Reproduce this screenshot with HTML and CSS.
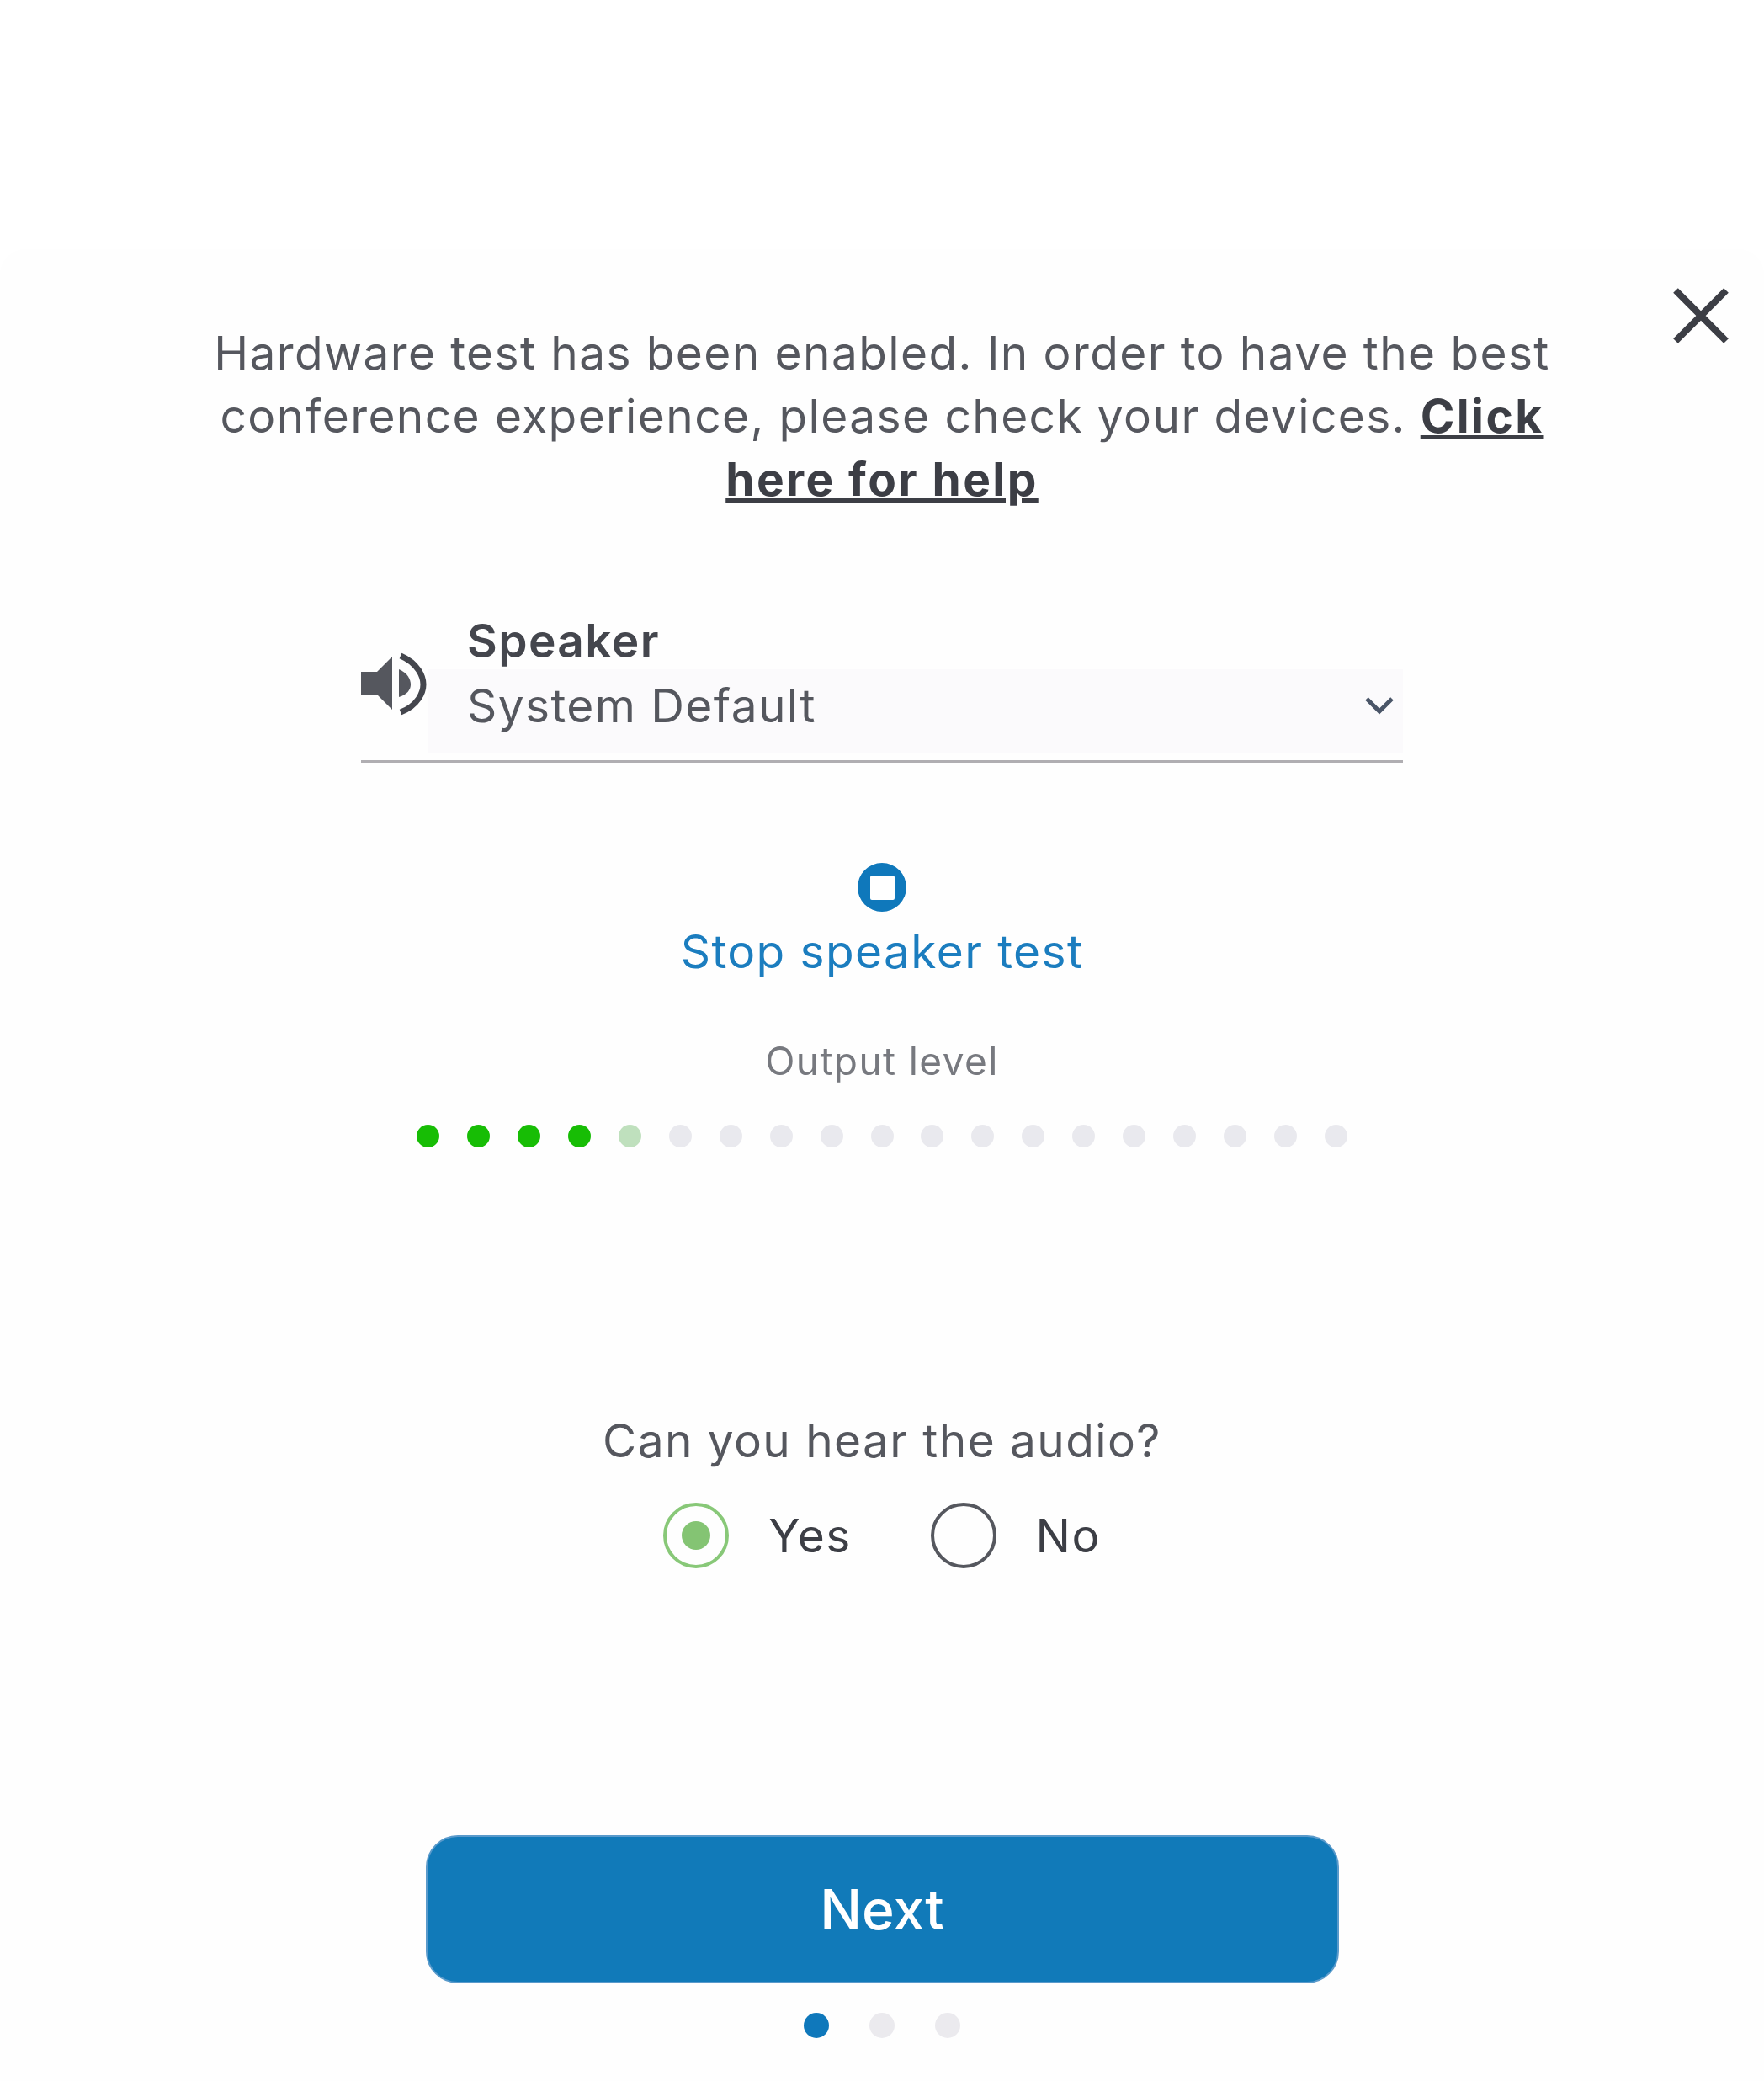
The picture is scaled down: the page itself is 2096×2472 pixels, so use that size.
FILE: index.html
```html
<!DOCTYPE html>
<html lang="en">
  <head>
    <meta charset="UTF-8" />
    <title>Hardware test</title>
    <link rel="stylesheet" href="styles.css">
  </head>
  <body>
    <main class="card">
      <button class="close" type="button" aria-label="Close">
        <svg viewBox="0 0 66 66" width="66" height="66">
          <path d="M3 3 L63 63 M63 3 L3 63" fill="none" stroke="#3c3e45" stroke-width="8" />
        </svg>
      </button>

      <p class="intro">
        Hardware test has been enabled. In order to have the best<br>
        conference experience, please check your devices. <a href="#">Click<br>here for help</a>
      </p>

      <div class="field">
        <svg class="field-icon" viewBox="0 0 80 80" width="80" height="80">
          <path d="M0 26 H19 L37 8 V71 L19 53 H0 Z" fill="#55575e" />
          <path d="M45 23 C55 27 59 35 59 41 C59 47 55 53 45 56 Z" fill="#55575e" />
          <path d="M47 7 C68 16 74 32 74 41 C74 50 68 66 47 74" fill="none" stroke="#44464d" stroke-width="7" />
        </svg>
        <div class="field-body">
          <label class="field-label">Speaker</label>
          <div class="select">
            <span>System Default</span>
            <svg viewBox="0 0 36 24" width="36" height="24">
              <path d="M3 4 L18 19 L33 4" fill="none" stroke="#4a5568" stroke-width="5" />
            </svg>
          </div>
        </div>
      </div>

      <div class="stop-icon"><span></span></div>
      <a class="stop-link" href="#">Stop speaker test</a>

      <div class="level-label">Output level</div>
      <div class="level">
        <span class="on"></span><span class="on"></span><span class="on"></span><span class="on"></span>
        <span class="half"></span>
        <span></span><span></span><span></span><span></span><span></span><span></span><span></span>
        <span></span><span></span><span></span><span></span><span></span><span></span><span></span>
      </div>

      <div class="question">Can you hear the audio?</div>
      <div class="answers">
        <div class="answer">
          <span class="radio checked"></span>
          <span>Yes</span>
        </div>
        <div class="answer">
          <span class="radio"></span>
          <span>No</span>
        </div>
      </div>

      <button class="next" type="button">Next</button>

      <div class="steps">
        <span class="current"></span><span></span><span></span>
      </div>
    </main>
  </body>
</html>
```

FILE: styles.css
```css
body {
  margin: 0;
  background: #ffffff;
  font-family: Inter, "Liberation Sans", sans-serif;
  color: #55575e;
}

/* the capture is a soft upscale, so everything is slightly out of focus */
.card {
  position: relative;
  margin-top: 296px;
  padding: 86px 0 51px;
  background: #fefefe;
  border-radius: 30px 30px 0 0;
  display: flex;
  flex-direction: column;
  align-items: center;
  filter: blur(0.7px);
}

.close {
  position: absolute;
  top: 46px;
  left: 1988px;
  padding: 0;
  border: none;
  background: none;
  line-height: 0;
}

.intro {
  margin: 0;
  font-size: 55px;
  line-height: 75px;
  letter-spacing: 1.4px;
  text-align: center;
  white-space: nowrap;
}

.intro a {
  color: #3c3e45;
  font-weight: 700;
  letter-spacing: 2.4px;
}

.field {
  display: flex;
  align-items: flex-start;
  width: 1238px;
  margin-top: 120px;
  border-bottom: 3px solid #b0aeb2;
  padding-bottom: 8px;
}

.field-icon {
  flex: none;
  margin-top: 45px;
}

.field-body {
  flex: 1;
}

.field-label {
  display: block;
  height: 68px;
  padding-left: 46px;
  font-size: 55px;
  line-height: 68px;
  font-weight: 600;
  letter-spacing: 1.4px;
  color: #44464d;
}

.select {
  display: flex;
  align-items: center;
  justify-content: space-between;
  height: 100px;
  padding: 0 10px 14px 46px;
  box-sizing: border-box;
  background: #fbfafc;
  font-size: 55px;
  letter-spacing: 1.4px;
}

.stop-icon {
  display: flex;
  align-items: center;
  justify-content: center;
  width: 58px;
  height: 58px;
  margin-top: 119px;
  border-radius: 50%;
  background: #0f78bb;
}

.stop-icon span {
  width: 29px;
  height: 29px;
  border-radius: 2px;
  background: #ffffff;
}

.stop-link {
  margin-top: 17px;
  font-size: 55px;
  line-height: 60px;
  letter-spacing: 1.4px;
  color: #1b7dbf;
  text-decoration: none;
}

.level-label {
  margin-top: 75px;
  font-size: 46px;
  line-height: 50px;
  letter-spacing: 1.4px;
  color: #77797f;
}

.level {
  display: flex;
  gap: 32.9px;
  margin-top: 51px;
}

.level span {
  width: 27px;
  height: 27px;
  border-radius: 50%;
  background: #e9e9ee;
}

.level .on {
  background: #17bd05;
}

.level .half {
  background: #bfe0bd;
}

.question {
  margin-top: 313px;
  font-size: 55px;
  line-height: 70px;
  letter-spacing: 1.4px;
}

.answers {
  display: flex;
  gap: 94px;
  margin-top: 39px;
}

.answer {
  display: flex;
  align-items: center;
  gap: 47px;
  font-size: 55px;
  letter-spacing: 1.4px;
  color: #3c3e45;
}

.radio {
  display: flex;
  align-items: center;
  justify-content: center;
  width: 78px;
  height: 78px;
  box-sizing: border-box;
  border: 4px solid #55575e;
  border-radius: 50%;
}

.radio.checked {
  border-color: #88c878;
}

.radio.checked::after {
  content: "";
  width: 34px;
  height: 34px;
  border-radius: 50%;
  background: #84c473;
}

.next {
  width: 1085px;
  height: 176px;
  margin-top: 317px;
  border: 2px solid #5a9acb;
  border-radius: 38px;
  background: #117ab9;
  color: #ffffff;
  font-family: inherit;
  font-size: 66px;
  font-weight: 500;
}

.steps {
  display: flex;
  gap: 48px;
  margin-top: 35px;
}

.steps span {
  width: 30px;
  height: 30px;
  border-radius: 50%;
  background: #ebeaee;
}

.steps .current {
  background: #0f78bb;
}
```
